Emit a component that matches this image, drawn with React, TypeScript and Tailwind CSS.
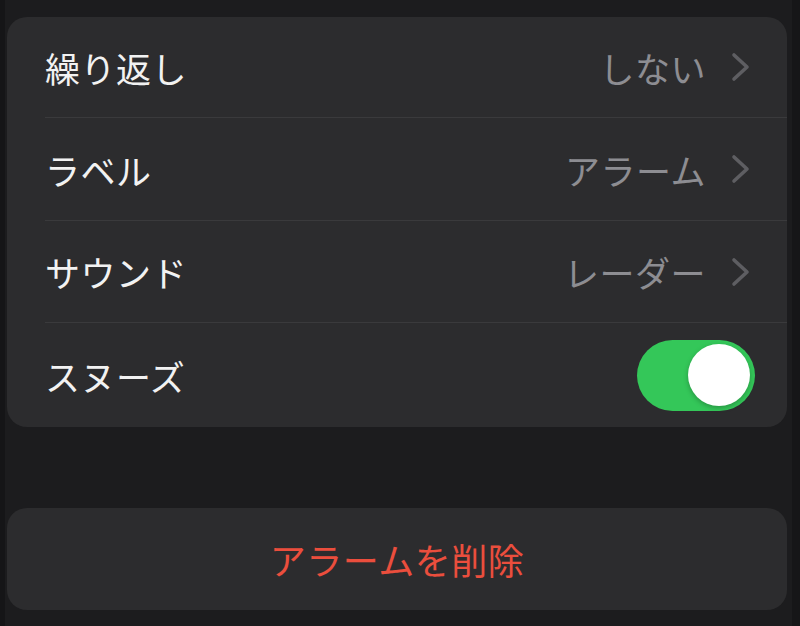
import React from "react";

const Chevron = () => (
  <svg width="20" height="30" viewBox="0 0 20 30" className="ml-[24px] -mr-[1px] shrink-0">
    <polyline points="4,3 17,15 4,27" fill="none" stroke="#5e5e62" strokeWidth="3.6" strokeLinecap="round" strokeLinejoin="round" />
  </svg>
);

const Row = ({ label, value, last, h, children }: { label: string; value?: string; last?: boolean; h: string; children?: React.ReactNode }) => (
  <div className={`pl-[38px] flex ${h}`}>
    <div className={`flex-1 flex items-center pr-[38px] ${last ? "" : "border-b border-[#3a3a3c]"}`}>
      <span className="text-[35px] text-[#f2f2f2] leading-none tracking-[0.5px]">{label}</span>
      <div className="flex-1" />
      {value !== undefined && (
        <>
          <span className="text-[35px] text-[#8d8d92] leading-none tracking-[0.5px]">{value}</span>
          <Chevron />
        </>
      )}
      {children}
    </div>
  </div>
);

export default function App() {
  return (
    <div
      className="w-[800px] h-[626px] bg-[#1c1c1e] flex overflow-hidden"
      style={{ fontFamily: '"Noto Sans CJK JP", "Noto Sans", sans-serif' }}
    >
      <div className="w-[5px] bg-[#151517]" />
      <div className="flex-1 flex flex-col pl-[2px] pr-[5px] pt-[17px]">
        <div className="rounded-[20px] bg-[#2c2c2e] h-[410px] flex flex-col">
          <Row label="繰り返し" value="しない" h="h-[101px]" />
          <Row label="ラベル" value="アラーム" h="h-[103px]" />
          <Row label="サウンド" value="レーダー" h="h-[102px]" />
          <Row label="スヌーズ" last h="flex-1">
            <div className="w-[118px] h-[71px] rounded-full bg-[#34c759] flex items-center justify-end pr-[5px] -mr-[6px]">
              <div className="w-[62px] h-[62px] rounded-full bg-white shadow-[0_2px_5px_rgba(0,0,0,0.25)]" />
            </div>
          </Row>
        </div>
        <div className="mt-[81px] rounded-[20px] bg-[#2c2c2e] h-[102px] flex items-center justify-center">
          <span className="text-[36px] text-[#eb4e3d] leading-none tracking-[0.5px]">アラームを削除</span>
        </div>
      </div>
      <div className="w-[8px] bg-[#161618]" />
    </div>
  );
}
